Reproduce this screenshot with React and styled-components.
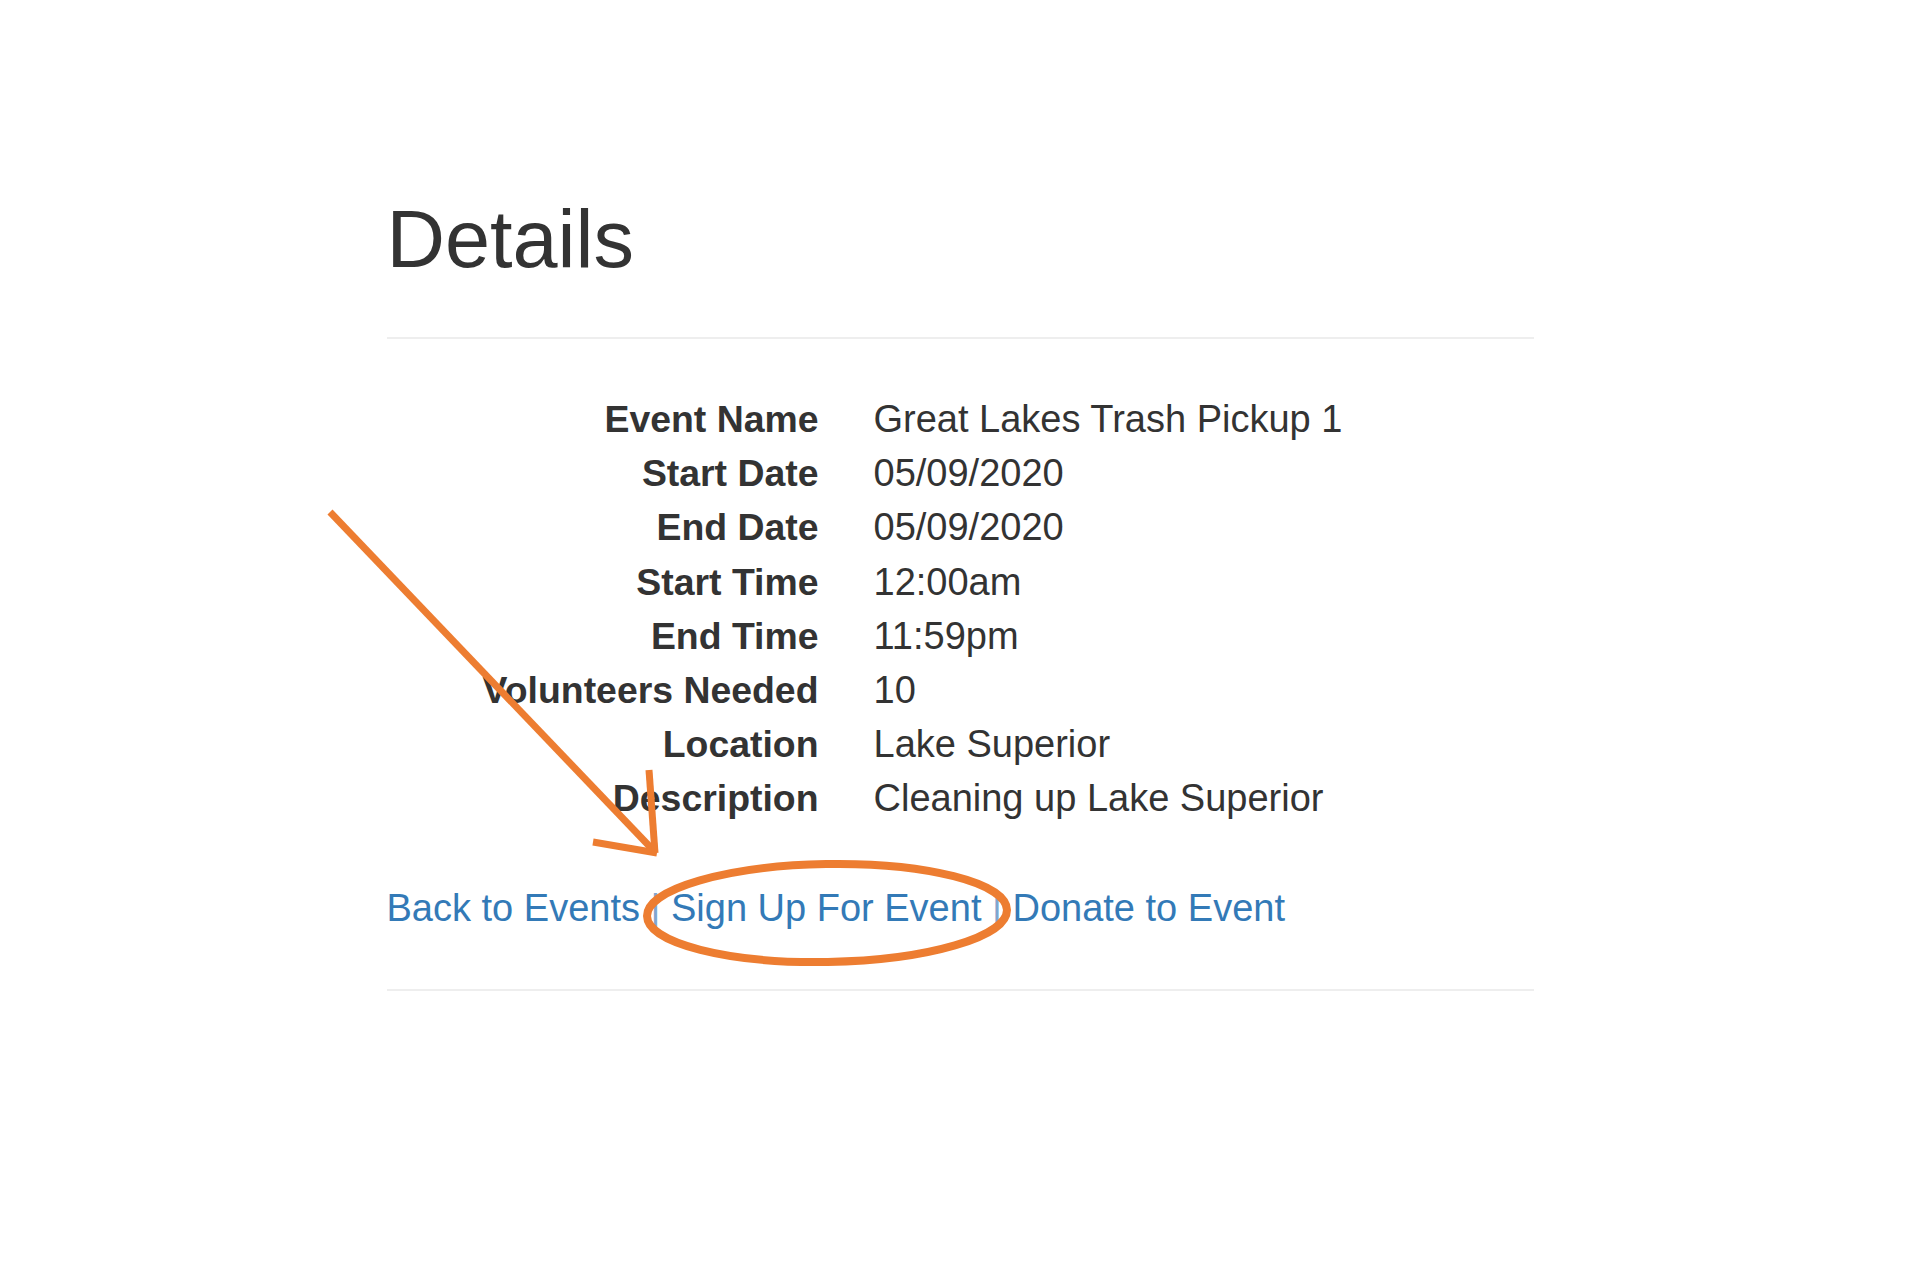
import React from "react";
import styled, { createGlobalStyle } from "styled-components";

const GlobalStyle = createGlobalStyle`
  html, body {
    margin: 0;
    padding: 0;
    background: #fff;
  }
  body {
    font-family: "Liberation Sans", Arial, sans-serif;
    color: #333;
  }
`;

const Page = styled.div`
  position: relative;
  width: 1920px;
  min-height: 1280px;
  padding-top: 195px;
  box-sizing: border-box;
`;

const Container = styled.div`
  width: 1147px;
  margin: 0 auto;
`;

const Title = styled.h2`
  font-size: 81px;
  font-weight: 400;
  line-height: 88px;
  margin: 0 0 54px;
  color: #333;
`;

const Rule = styled.hr`
  border: 0;
  border-top: 2px solid #eee;
  margin: 0;
`;

const DetailList = styled.dl`
  display: grid;
  grid-template-columns: 432px 1fr;
  column-gap: 55px;
  margin: 53px 0 55px;
  font-size: 38px;
  line-height: 54.2px;
`;

const Label = styled.dt`
  font-size: 37.4px;
  font-weight: 700;
  text-align: right;
  white-space: nowrap;
`;

const Value = styled.dd`
  margin: 0;
`;

const Actions = styled.p`
  margin: 0 0 54px;
  font-size: 38px;
  line-height: 54px;
`;

const Link = styled.a`
  color: #337ab7;
  text-decoration: none;
`;

const Sep = styled.span`
  color: #7fa6cf;
`;

const Overlay = styled.svg`
  position: absolute;
  top: 0;
  left: 0;
  pointer-events: none;
`;

const details = [
  ["Event Name", "Great Lakes Trash Pickup 1"],
  ["Start Date", "05/09/2020"],
  ["End Date", "05/09/2020"],
  ["Start Time", "12:00am"],
  ["End Time", "11:59pm"],
  ["Volunteers Needed", "10"],
  ["Location", "Lake Superior"],
  ["Description", "Cleaning up Lake Superior"],
];

export default function App() {
  return (
    <Page>
      <GlobalStyle />
      <Container>
        <Title>Details</Title>
        <Rule />
        <DetailList>
          {details.map(([label, value]) => (
            <React.Fragment key={label}>
              <Label>{label}</Label>
              <Value>{value}</Value>
            </React.Fragment>
          ))}
        </DetailList>
        <Actions>
          <Link href="#">Back to Events</Link>
          <Sep> | </Sep>
          <Link href="#">Sign Up For Event</Link>
          <Sep> | </Sep>
          <Link href="#">Donate to Event</Link>
        </Actions>
        <Rule />
      </Container>

      {/* hand-drawn annotation */}
      <Overlay width="1920" height="1280" viewBox="0 0 1920 1280">
        <g stroke="#ed7d31" strokeWidth="7" fill="none" strokeLinecap="butt">
          <line x1="330" y1="512" x2="654" y2="851" />
          <line x1="593" y1="842" x2="657" y2="853" />
          <line x1="649" y1="770" x2="655" y2="853" />
          <ellipse
            cx="827"
            cy="913"
            rx="180"
            ry="49"
            strokeWidth="8"
            transform="rotate(-1 827 913)"
          />
        </g>
      </Overlay>
    </Page>
  );
}
